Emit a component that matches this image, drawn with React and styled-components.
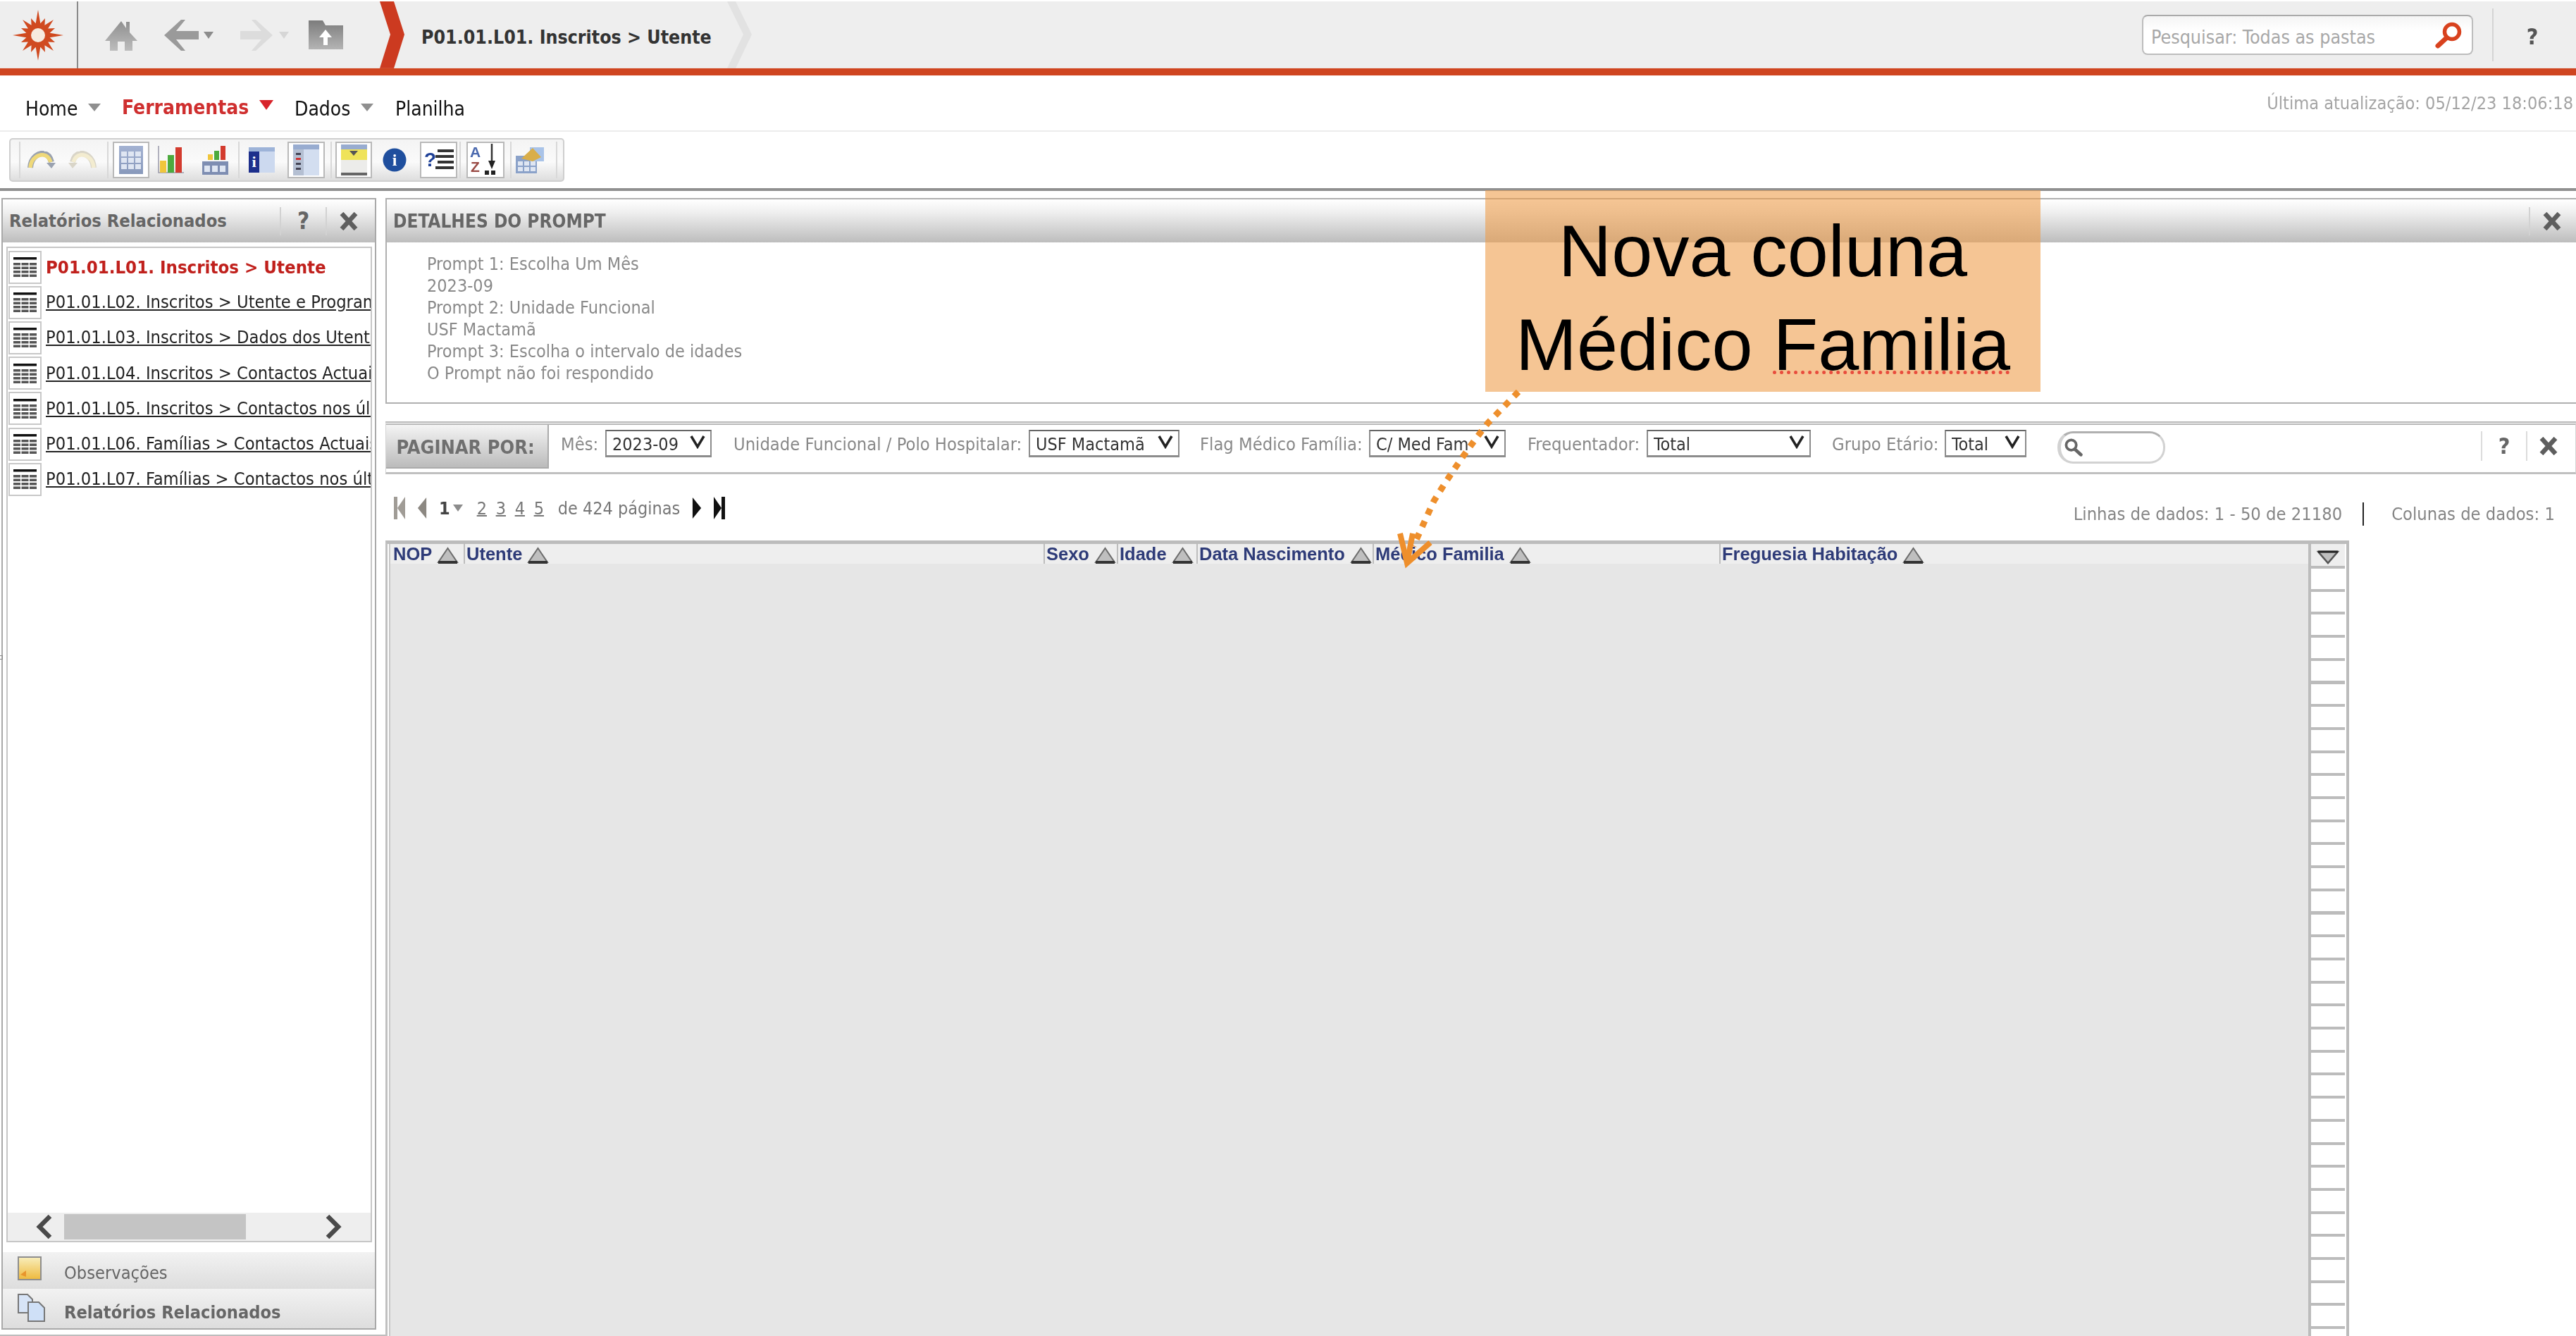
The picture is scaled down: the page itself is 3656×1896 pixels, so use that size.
import React from "react";
import styled, { createGlobalStyle } from "styled-components";

const SANS = `"DejaVu Sans", "Liberation Sans", sans-serif`;

const Global = createGlobalStyle`
  html, body { margin: 0; padding: 0; background: #fff; }
  body { width: 3656px; height: 1896px; overflow: hidden; font-family: ${SANS}; font-stretch: condensed; }
  * { box-sizing: border-box; }
`;

const Page = styled.div`position: relative; width: 3656px; height: 1896px; overflow: hidden; background: #fff;`;
const Shell = styled.div`display: flex; flex-direction: column; width: 3656px; height: 1896px; padding-top: 2px; filter: blur(0.55px);`;

const TopBar = styled.header`display: flex; align-items: center; height: 95px; background: #eeeeee; flex: none;`;
const LogoCell = styled.div`width: 111px; height: 100%; flex: none; display: flex; align-items: center; padding-left: 18px; border-right: 2px solid #8a8a8a;`;
const Slot = styled.span`display: flex; flex: none; margin-left: ${p => p.$ml || 0}px;`;
const Crumb = styled.div`margin-left: 23px; width: 412px; flex: none; padding-top: 6px; font-size: 26.5px; font-weight: 700; color: #333; white-space: nowrap;`;
const SearchBox = styled.div`
  margin-left: auto; width: 470px; height: 57px; flex: none; display: flex; align-items: center; justify-content: space-between;
  padding: 6px 14px 0 11px; border: 2px solid #bdbdbd; border-top-color: #aaa; border-radius: 8px; background: linear-gradient(#f5f5f5, #ffffff 40%);
  color: #a8a8a8; font-size: 26.6px; white-space: nowrap;
`;
const SearchGlass = styled.span`display: flex; margin-top: -6px;`;
const TopSep = styled.div`margin-left: 27px; width: 2px; height: 75px; background: #d4d4d4; flex: none;`;
const TopHelp = styled.div`width: 117px; padding-right: 7px; padding-top: 4px; text-align: center; font-size: 32px; font-weight: 700; color: #555; flex: none;`;
const Stripe = styled.div`height: 10px; background: #cf4520; flex: none; box-shadow: 0 0 1px #e9a58c;`;

const MenuRow = styled.nav`display: flex; align-items: center; height: 80px; flex: none; padding: 0 4px 0 36px; border-bottom: 2px solid #ececec;`;
const MenuItem = styled.span`
  flex: none; width: ${p => p.$w}px; margin-left: ${p => p.$ml || 0}px; font-size: 28px; white-space: nowrap;
  color: ${p => (p.$active ? "#cf2f2f" : "#111")}; font-weight: ${p => (p.$active ? 700 : 400)};
  position: relative; top: ${p => (p.$active ? 6 : 8)}px;
`;
const Caret = styled.span`
  flex: none; margin-left: ${p => p.$ml}px; width: 0; height: 0; position: relative; top: ${p => (p.$active ? 3 : 6)}px;
  border-left: ${p => (p.$active ? 10 : 9)}px solid transparent; border-right: ${p => (p.$active ? 10 : 9)}px solid transparent;
  border-top: ${p => (p.$active ? 14 : 11)}px solid ${p => (p.$active ? "#d8232a" : "#8f8f8f")};
`;
const UpdatedAt = styled.span`margin-left: auto; position: relative; top: 0; font-size: 25.1px; color: #a4a4a4; white-space: nowrap;`;

const ToolRow = styled.div`height: 84px; flex: none; padding: 9px 0 0 13px; border-bottom: 4px solid #909090;`;
const Toolbar = styled.div`
  display: flex; align-items: center; width: 788px; height: 62px; padding-left: 12px; border: 2px solid #cfcfcf; border-radius: 5px;
  background: linear-gradient(#f4f4f4, #fafafa 55%, #dedede);
`;
const ToolDivider = styled.span`flex: none; width: 2px; height: 52px; background: #d8d8d8; margin-left: ${p => p.$ml}px;`;
const ToolSlot = styled.span`
  flex: none; display: flex; align-items: center; justify-content: center; width: ${p => p.$w}px; height: 52px; margin-left: ${p => p.$ml}px;
  ${p => (p.$boxed ? "background:#fff;border:2px solid #b9b9b9;" : "")}
`;

const Body = styled.div`display: flex; flex: 1; min-height: 0; padding: 10px 0 0 2px; gap: 13px;`;

const SidePanel = styled.aside`width: 532px; height: 1606px; flex: none; display: flex; flex-direction: column; border: 2px solid #a9a9a9;`;
const HeadBar = styled.div`
  display: flex; align-items: center; height: 61px; flex: none; padding-left: ${p => p.$pl}px;
  background: linear-gradient(#ffffff, #efefef 30%, #bdbdbd); color: #666; font-size: ${p => p.$fs}px; font-weight: 700; white-space: nowrap;
`;
const HeadTitle = styled.span`flex: none; width: 384px;`;
const HeadSep = styled.span`flex: none; width: 2px; height: 40px; background: #d2d2d2; margin-left: ${p => p.$ml || 0}px;`;
const HeadHelp = styled.span`flex: none; width: ${p => p.$w}px; text-align: center; font-size: 33px; font-weight: 700; color: #666;`;
const ListFrame = styled.div`flex: 1; min-height: 0; margin: 6px 4px 14px 5px; display: flex; flex-direction: column; border: 2px solid #c6c6c6;`;
const ListBody = styled.div`flex: 1; padding: 2px 0 0 1px; display: flex; flex-direction: column; overflow: hidden;`;
const ReportRow = styled.div`display: flex; align-items: center; height: 50.2px; flex: none; gap: 6px;`;
const ReportIcon = styled.span`flex: none; width: 47px; height: 47px; display: flex; align-items: center; justify-content: center; border: 2px solid #c8c8c8; background: #fff;`;
const ReportLink = styled.a`
  flex: 1; min-width: 0; overflow: hidden; white-space: nowrap; font-size: ${p => (p.$active ? 25.6 : 25.25)}px; line-height: 36px;
  color: ${p => (p.$active ? "#c0201c" : "#222")}; font-weight: ${p => (p.$active ? 700 : 400)};
  text-decoration: ${p => (p.$active ? "none" : "underline")};
`;
const HScroll = styled.div`display: flex; align-items: center; height: 40px; flex: none; background: #eeeeee; position: relative;`;
const Thumb = styled.span`flex: none; width: 258px; height: 36px; margin-left: 16px; background: #c4c4c4;`;
const SideTab = styled.div`
  display: flex; align-items: flex-end; height: ${p => p.$h}px; flex: none; padding: 0 0 8px 21px;
  background: linear-gradient(#f2f2f2, #dddddd); color: #666; font-size: 25.2px; font-weight: ${p => (p.$strong ? 700 : 400)}; white-space: nowrap;
`;
const TabIcon = styled.span`flex: none; width: 66px; align-self: flex-start; margin-top: 6px;`;

const Main = styled.main`flex: 1; min-width: 0; display: flex; flex-direction: column;`;
const PromptPanel = styled.section`height: 292px; flex: none; border: 2px solid #b0b0b0; border-right: none;`;
const PromptTitle = styled.span`flex: none; width: 3031px;`;
const PromptBody = styled.div`padding: 15px 0 0 57px; font-size: 25px; line-height: 31px; color: #8a8a8a;`;

const PagingBar = styled.section`
  display: flex; align-items: flex-start; height: 75px; margin-top: 25px; flex: none; border: 1px solid #d4d4d4; border-top: 5px double #b8b8b8; border-bottom: 3px solid #c0c0c0;
`;
const PagingButton = styled.div`
  flex: none; width: 231px; height: 62px; margin-right: 17px; display: flex; align-items: center; justify-content: center; padding: 2px 4px 0 0;
  background: linear-gradient(#f4f4f4, #bbbbbb); border-right: 2px solid #aaa; border-bottom: 2px solid #aaa; color: #6f6f6f; font-size: 27px; font-weight: 700; white-space: nowrap;
`;
const FilterLabel = styled.span`flex: none; width: ${p => p.$w}px; margin-top: 13px; font-size: 25.3px; color: #888; white-space: nowrap;`;
const SelectBox = styled.div`
  flex: none; display: flex; align-items: center; justify-content: space-between; width: ${p => p.$w}px; height: 39px; margin: 7px ${p => p.$mr || 0}px 0 9px; padding: 2px 7px 0 8px;
  background: #fff; border: 2px solid #8c8c8c; border-top-color: #666; border-bottom-width: 3px; color: #333; font-size: 25px; overflow: hidden; white-space: nowrap;
`;
const SelectText = styled.span`flex: 1; min-width: 0; overflow: hidden;`;
const SearchPill = styled.div`
  flex: none; display: flex; align-items: center; width: 153px; height: 46px; margin: 9px 0 0 44px; padding-left: 5px;
  background: #fff; border: 3px solid #d2d2d2; border-left-width: 5px; border-top-color: #b0b0b0; border-radius: 22px;
`;
const PillGlass = styled.span`display: flex; transform: scaleX(-1);`;
const BarTools = styled.div`margin-left: auto; display: flex; align-items: center; height: 52px; margin-top: 4px; padding-right: 25px;`;
const BarSep = styled.span`flex: none; width: 2px; height: 42px; background: #dcdcdc;`;
const BarHelp = styled.span`flex: none; width: ${p => p.$w}px; text-align: center; font-size: 32px; font-weight: 700; color: #666;`;

const PagerRow = styled.div`display: flex; align-items: center; height: 94px; flex: none; padding-left: 12px; color: #777; font-size: 25px;`;
const PagerSlot = styled.span`flex: none; display: flex; margin-left: ${p => p.$ml || 0}px; position: relative; top: 1px;`;
const PageCurrent = styled.span`flex: none; margin-left: 16px; position: relative; top: 1px; font-weight: 700; color: #444;`;
const PageGap = styled.span`flex: none; width: 20px;`;
const PageLink = styled.a`flex: none; width: 27px; position: relative; top: 1px; color: #777; text-decoration: underline; text-decoration-thickness: 2px;`;
const PagerText = styled.span`flex: none; width: 172px; margin-left: 7px; position: relative; top: 1px; white-space: nowrap;`;
const PagerSpacer = styled.span`flex: none; width: 1914px;`;
const DataStat = styled.span`flex: none; position: relative; top: 9px; white-space: nowrap; color: #858585; font-size: 25.3px;`;
const DataSep = styled.span`flex: none; width: 2px; height: 33px; margin: 18px 39px 0 29px; background: #222;`;

const TableFrame = styled.section`display: flex; flex: 1; min-height: 0; width: 2787px; border-top: 5px solid #bcbcbc; border-left: 3px solid #c0c0c0; border-right: 4px solid #bcbcbc;`;
const TableMain = styled.div`flex: 1; min-width: 0; display: flex; flex-direction: column; margin-left: 2px; border-left: 2px solid #c8c8c8; background: #e6e6e6;`;
const HeaderRow = styled.div`display: grid; grid-template-columns: 104px 823px 104px 113px 250px 492px 1fr; height: 28px; flex: none; background: #eeeeee;`;
const HeaderCell = styled.div`
  display: flex; align-items: center; gap: 7px; padding-left: 2px; white-space: nowrap; overflow: hidden;
  font-family: "Liberation Sans", sans-serif; font-stretch: normal; font-size: 25.5px; font-weight: 700; color: #2e3b78;
  border-left: 2px solid ${p => (p.$first ? "transparent" : "#bdbdbd")};
`;
const SortUpGlyph = styled.svg`flex: none; margin-top: 4px;`;
const TickColumn = styled.div`
  flex: none; width: 52px; display: flex; flex-direction: column; border-left: 4px solid #bcbcbc;
  background: repeating-linear-gradient(to bottom, #bcbcbc 0 4px, transparent 4px 32.7px); background-position: 0 31px; background-repeat: no-repeat;
  margin-right: 2px;
`;
const TickHead = styled.div`height: 31px; flex: none; background: #eeeeee; display: flex; justify-content: center; padding-top: 9px;`;

const SideNotch = styled.span`position: absolute; left: 0; top: 930px; width: 4px; height: 6px; border: 1px solid #888; border-left: none;`;
const BottomRule = styled.span`position: absolute; left: 0; bottom: 0; width: 547px; height: 2px; background: #bdbdbd;`;

const Callout = styled.aside`
  position: absolute; left: 2108px; top: 270px; width: 788px; height: 286px; padding-top: 19px; background: rgba(238,155,70,.58);
  color: #000; text-align: center; font-family: "Liberation Sans", sans-serif; font-stretch: normal; font-size: 104.4px; line-height: 133px; white-space: nowrap;
`;
const Squiggle = styled.span`text-decoration: underline dotted #e84c3d 5px; text-decoration-skip-ink: none; text-underline-offset: 1px;`;
const ArrowLayer = styled.svg`position: absolute; left: 0; top: 0; pointer-events: none;`;

/* ---- drawings ---- */
const Logo = () => {
  const pts = [];
  const n = 16;
  for (let i = 0; i < n * 2; i++) {
    const a = (Math.PI * i) / n - Math.PI / 2;
    const major = i % 8 === 0;
    const r = i % 2 ? 17 : major ? 36 : i % 4 === 0 ? 31 : 26;
    pts.push(`${36 + r * Math.cos(a)},${36 + r * Math.sin(a)}`);
  }
  return (
    <svg width="72" height="72" viewBox="0 0 72 72">
      <polygon points={pts.join(" ")} fill="#d04a20" />
      <circle cx="36" cy="36" r="10" fill="#f7ebdf" />
    </svg>
  );
};
const Grad = ({ id, a, b }) => (
  <linearGradient id={id} x1="0" y1="0" x2="0" y2="1">
    <stop offset="0" stopColor={a} />
    <stop offset="1" stopColor={b} />
  </linearGradient>
);
const HomeIcon = () => (
  <svg width="46" height="44" viewBox="0 0 46 44">
    <defs><Grad id="gh" a="#8f8f8f" b="#bdbdbd" /></defs>
    <path d="M23 2 L30 12 V3 H35 V18 L46 30 H39 V44 H28 V31 H18 V44 H7 V30 H0 Z" fill="url(#gh)" />
  </svg>
);
const BackIcon = () => (
  <svg width="49" height="44" viewBox="0 0 49 44">
    <path d="M24 0 H30 L17 16 H49 V28 H17 L30 44 H24 L0 22 Z" fill="#9a9a9a" />
  </svg>
);
const ForwardIcon = () => (
  <svg width="46" height="44" viewBox="0 0 46 44">
    <path d="M22 0 H16 L30 16 H0 V28 H30 L16 44 H22 L46 22 Z" fill="#dcdcdc" />
  </svg>
);
const MiniCaret = ({ light }) => (
  <svg width="14" height="10" viewBox="0 0 14 10"><path d="M0 0H14L7 10Z" fill={light ? "#d6d6d6" : "#8c8c8c"} /></svg>
);
const FolderUp = () => (
  <svg width="49" height="41" viewBox="0 0 49 41">
    <defs><Grad id="gf" a="#7c7c7c" b="#b4b4b4" /></defs>
    <path d="M0 0H20L24 7H49V41H0Z" fill="url(#gf)" />
    <path d="M24 13L33 24H27V35H21V24H15Z" fill="#fff" />
  </svg>
);
const Chevron = ({ color, w }) => (
  <svg width="38" height="95" viewBox="0 0 38 95">
    <path d={`M2 0 H${w} L37 47 L${w} 95 H2 L${39 - w} 47 Z`} fill={color} />
  </svg>
);
const Magnifier = ({ c = "#d8421e", s = 38 }) => (
  <svg width={s} height={s} viewBox="0 0 38 38">
    <circle cx="24" cy="14" r="10.5" fill="none" stroke={c} strokeWidth="5.5" />
    <path d="M16 23L4 34" stroke={c} strokeWidth="7" strokeLinecap="round" />
  </svg>
);
const CloseX = ({ s = 26, c = "#5e5e5e" }) => (
  <svg width={s} height={s} viewBox="0 0 26 26"><path d="M3 2L23 24M23 2L3 24" stroke={c} strokeWidth="6.5" /></svg>
);
const UndoIcon = ({ flip, light }) => (
  <svg width="41" height="26" viewBox="0 0 41 26" style={flip ? { transform: "scaleX(-1)" } : undefined}>
    <path d="M5 24 C6 8 18 3 24 4 C31 5 34 12 35 16" fill="none" stroke={light ? "#d9d5c8" : "#9aa2b0"} strokeWidth="8" />
    <path d="M5 24 C6 9 18 5 24 6 C30 7 33 13 34 16" fill="none" stroke={light ? "#f3ecd0" : "#efd97a"} strokeWidth="5.5" />
    <path d="M28 17 H41 L35 25Z" fill={light ? "#d9d5c8" : "#9aa2b0"} />
  </svg>
);
const GridIcon = () => (
  <svg width="34" height="40" viewBox="0 0 34 40">
    <defs><Grad id="gt" a="#a3b2d2" b="#8899bb" /></defs>
    <rect width="34" height="40" fill="url(#gt)" />
    {[0, 1, 2].map(c =>
      [8, 17, 26].map(y => <rect key={`${c}-${y}`} x={3 + c * 10} y={y} width="8" height="7" fill="#dfe6f2" />)
    )}
  </svg>
);
const BarsIcon = () => (
  <svg width="37" height="40" viewBox="0 0 37 40">
    <path d="M1 0V38H37" fill="none" stroke="#99a" strokeWidth="1.5" />
    <rect x="3" y="21" width="9" height="17" fill="#f0c63c" />
    <rect x="14" y="13" width="9" height="25" fill="#4caa3e" />
    <rect x="25" y="2" width="9" height="36" fill="#d33b2e" />
  </svg>
);
const PivotIcon = () => (
  <svg width="37" height="41" viewBox="0 0 37 41">
    <rect x="8" y="12" width="7" height="8" fill="#f0c63c" />
    <rect x="17" y="7" width="7" height="13" fill="#4caa3e" />
    <rect x="26" y="0" width="7" height="20" fill="#d33b2e" />
    <rect y="22" width="37" height="19" fill="#7e8eb2" />
    {[3, 14, 25].map(x => <rect key={x} x={x} y="28" width="8" height="9" fill="#dfe6f2" />)}
  </svg>
);
const InfoPane = () => (
  <svg width="37" height="36" viewBox="0 0 37 36">
    <rect width="37" height="36" fill="#ccd9ef" />
    <rect width="37" height="6" fill="#9db3d8" />
    <rect x="0" y="6" width="15" height="30" fill="#1d2f8c" />
    <text x="7.5" y="28" textAnchor="middle" fontFamily="Liberation Serif, serif" fontWeight="700" fontSize="22" fill="#fff">i</text>
  </svg>
);
const ListPane = () => (
  <svg width="37" height="44" viewBox="0 0 37 44">
    <rect width="37" height="44" fill="#d3def0" />
    <rect width="37" height="7" fill="#98acd0" />
    <rect y="7" width="15" height="37" fill="#b4bfd2" />
    {[12, 19, 26, 33].map((y, i) => <rect key={y} x="4" y={y} width="7" height="3" fill={i === 1 ? "#c33" : "#445"} />)}
  </svg>
);
const FilterPane = () => (
  <svg width="37" height="44" viewBox="0 0 37 44">
    <rect width="37" height="44" fill="#ececea" />
    <rect width="37" height="7" fill="#98acd0" />
    <rect y="7" width="37" height="15" fill="#efe35a" />
    <path d="M12 9H24L18 16Z" fill="#555" />
    <rect y="40" width="37" height="4" fill="#666" />
  </svg>
);
const InfoDot = () => (
  <svg width="34" height="34" viewBox="0 0 34 34">
    <circle cx="17" cy="17" r="16.5" fill="#1f4f9e" />
    <text x="17" y="25" textAnchor="middle" fontFamily="Liberation Serif, serif" fontWeight="700" fontSize="24" fill="#fff">i</text>
  </svg>
);
const QuestionList = () => (
  <svg width="42" height="32" viewBox="0 0 42 32">
    <text x="0" y="25" fontFamily="Liberation Sans, sans-serif" fontWeight="700" fontSize="28" fill="#1d3f96">?</text>
    {[3, 11, 19, 27].map((y, i) => <rect key={y} x={i % 2 ? 16 : 19} y={y - 2} width={i % 2 ? 26 : 23} height="4" fill="#333" />)}
  </svg>
);
const SortIcon = () => (
  <svg width="44" height="46" viewBox="0 0 44 46">
    <text x="0" y="19" fontFamily="Liberation Sans, sans-serif" fontWeight="700" fontSize="21" fill="#4a68ae">A</text>
    <text x="1" y="40" fontFamily="Liberation Sans, sans-serif" fontWeight="700" fontSize="21" fill="#9a4a44">Z</text>
    <path d="M31 0V32" stroke="#333" strokeWidth="2.5" />
    <path d="M26 24H36L31 36Z" fill="#222" />
    <rect x="21" y="38" width="6" height="6" fill="#222" />
    <rect x="30" y="38" width="6" height="6" fill="#222" />
  </svg>
);
const ExportIcon = () => (
  <svg width="40" height="37" viewBox="0 0 40 37">
    <rect x="0" y="12" width="30" height="25" fill="#8ba2c9" />
    {[3, 12, 21].map(x => [20, 28].map(y => <rect key={x + "-" + y} x={x} y={y} width="7" height="6" fill="#dfe6f2" />))}
    <rect x="20" y="0" width="20" height="20" fill="#a9c3e8" />
    <path d="M8 16 L24 1 L36 14 L24 20Z" fill="#d9ae4a" />
  </svg>
);
const TableGlyph = () => (
  <svg width="33" height="28" viewBox="0 0 33 28">
    <rect width="33" height="3.5" fill="#111" />
    {[8, 13.5, 19, 24.5].map(y => [0, 11.5, 23].map(x => <rect key={x + "-" + y} x={x} y={y} width="10" height="3.5" fill="#555" />))}
  </svg>
);
const ChevronLeft = ({ right }) => (
  <svg width="24" height="36" viewBox="0 0 24 36" style={right ? { transform: "scaleX(-1)" } : undefined}>
    <path d="M20 3L5 18L20 33" fill="none" stroke="#4a4a4a" strokeWidth="6.5" />
  </svg>
);
const NoteIcon = () => (
  <svg width="34" height="34" viewBox="0 0 34 34">
    <defs><Grad id="gn" a="#f8eebc" b="#eeb93c" /></defs>
    <rect x="1" y="1" width="32" height="32" fill="url(#gn)" stroke="#8e8e8e" strokeWidth="2" />
    <path d="M4 26L12 29V20Z" fill="#e8952c" />
  </svg>
);
const DocsIcon = () => (
  <svg width="40" height="42" viewBox="0 0 40 42">
    <path d="M1 2H14L21 9V28H1Z" fill="#d7e4f7" stroke="#777" strokeWidth="2" />
    <path d="M15 13H30L38 21V40H15Z" fill="#cfe0f7" stroke="#777" strokeWidth="2" />
  </svg>
);
const SortUp = () => (
  <SortUpGlyph width="31" height="24" viewBox="0 0 31 24">
    <path d="M15.5 2L29 22H2Z" fill="#bfbfbf" stroke="#6c6c6c" strokeWidth="2" />
    <path d="M2 22H29" stroke="#333" strokeWidth="4" />
  </SortUpGlyph>
);
const SortDown = () => (
  <svg width="32" height="20" viewBox="0 0 32 20">
    <path d="M2 2H30L16 18Z" fill="#bfbfbf" stroke="#555" strokeWidth="2.5" />
    <path d="M2 2H30" stroke="#222" strokeWidth="3" />
  </svg>
);
const SelectChevron = () => (
  <svg width="22" height="20" viewBox="0 0 22 20" style={{ flex: "none", marginTop: -6 }}>
    <path d="M2 2L11 17L20 2" fill="none" stroke="#222" strokeWidth="3.5" />
  </svg>
);
const PagerTri = ({ dir, bar, c }) => (
  <svg width={bar ? 16 : 15} height="36" viewBox="0 0 16 36">
    {dir === "left"
      ? <path d={bar ? "M16 2V34L5 18Z" : "M14 2V34L1 18Z"} fill={c} />
      : <path d={bar ? "M0 2V34L11 18Z" : "M1 2V34L14 18Z"} fill={c} />}
    {bar && <rect x={dir === "left" ? 0 : 11} y="2" width="5" height="32" fill={c} />}
  </svg>
);

const ARROW_DOTS = "M2155 556 L2112 600 C2088 630 2060 670 2035 711 L2006 775";

const reports = [
  ["P01.01.L01. Inscritos > Utente", true],
  ["P01.01.L02. Inscritos > Utente e Programa"],
  ["P01.01.L03. Inscritos > Dados dos Utentes"],
  ["P01.01.L04. Inscritos > Contactos Actuais"],
  ["P01.01.L05. Inscritos > Contactos nos últimos"],
  ["P01.01.L06. Famílias > Contactos Actuais"],
  ["P01.01.L07. Famílias > Contactos nos últimos"],
];

const tools = [
  { w: 41, ml: 9, i: <UndoIcon /> },
  { w: 41, ml: 18, i: <UndoIcon flip light /> },
  { d: 14 },
  { w: 52, ml: 6, b: 1, i: <GridIcon /> },
  { w: 37, ml: 12, i: <BarsIcon /> },
  { w: 37, ml: 26, i: <PivotIcon /> },
  { d: 14 },
  { w: 37, ml: 13, i: <InfoPane /> },
  { w: 53, ml: 18, b: 1, i: <ListPane /> },
  { d: 8 },
  { w: 52, ml: 5, b: 1, i: <FilterPane /> },
  { w: 34, ml: 15, i: <InfoDot /> },
  { w: 53, ml: 19, b: 1, i: <QuestionList /> },
  { d: 3 },
  { w: 54, ml: 8, b: 1, i: <SortIcon /> },
  { d: 8 },
  { w: 40, ml: 6, i: <ExportIcon /> },
  { d: 17 },
];

const columns = ["NOP", "Utente", "Sexo", "Idade", "Data Nascimento", "Médico Familia", "Freguesia Habitação"];

export default function App() {
  return (
    <Page>
      <Global />
      <Shell>
        <TopBar>
          <LogoCell><Logo /></LogoCell>
          <Slot $ml={38}><HomeIcon /></Slot>
          <Slot $ml={38}><BackIcon /></Slot>
          <Slot $ml={7}><MiniCaret /></Slot>
          <Slot $ml={38}><ForwardIcon /></Slot>
          <Slot $ml={9}><MiniCaret light /></Slot>
          <Slot $ml={28}><FolderUp /></Slot>
          <Slot $ml={50}><Chevron color="#cc3a20" w={22} /></Slot>
          <Crumb>P01.01.L01. Inscritos &gt; Utente</Crumb>
          <Slot $ml={20}><Chevron color="#e2e2e2" w={14} /></Slot>
          <SearchBox>Pesquisar: Todas as pastas<SearchGlass><Magnifier /></SearchGlass></SearchBox>
          <TopSep />
          <TopHelp>?</TopHelp>
        </TopBar>
        <Stripe />
        <MenuRow>
          <MenuItem $w={72}>Home</MenuItem>
          <Caret $ml={17} />
          <MenuItem $w={179} $ml={30} $active>Ferramentas</MenuItem>
          <Caret $ml={16} $active />
          <MenuItem $w={78} $ml={30}>Dados</MenuItem>
          <Caret $ml={16} />
          <MenuItem $w={95} $ml={31}>Planilha</MenuItem>
          <UpdatedAt>Última atualização: 05/12/23 18:06:18</UpdatedAt>
        </MenuRow>
        <ToolRow>
          <Toolbar>
            <ToolDivider $ml={0} />
            {tools.map((t, n) =>
              t.d ? <ToolDivider key={n} $ml={t.d} /> : <ToolSlot key={n} $w={t.w} $ml={t.ml} $boxed={t.b}>{t.i}</ToolSlot>
            )}
          </Toolbar>
        </ToolRow>
        <Body>
          <SidePanel>
            <HeadBar $pl={9} $fs={25.3}>
              <HeadTitle>Relatórios Relacionados</HeadTitle>
              <HeadSep />
              <HeadHelp $w={63}>?</HeadHelp>
              <HeadSep />
              <Slot $ml={18}><CloseX /></Slot>
            </HeadBar>
            <ListFrame>
              <ListBody>
                {reports.map(([label, active]) => (
                  <ReportRow key={label}>
                    <ReportIcon><TableGlyph /></ReportIcon>
                    <ReportLink $active={active}>{label}</ReportLink>
                  </ReportRow>
                ))}
              </ListBody>
              <HScroll>
                <Slot $ml={40}><ChevronLeft /></Slot>
                <Thumb />
                <Slot $ml={112}><ChevronLeft right /></Slot>
              </HScroll>
            </ListFrame>
            <SideTab $h={52}><TabIcon><NoteIcon /></TabIcon>Observações</SideTab>
            <SideTab $h={56} $strong><TabIcon><DocsIcon /></TabIcon>Relatórios Relacionados</SideTab>
          </SidePanel>
          <Main>
            <PromptPanel>
              <HeadBar $pl={9} $fs={26}>
                <PromptTitle>DETALHES DO PROMPT</PromptTitle>
                <HeadSep />
                <Slot $ml={18}><CloseX /></Slot>
              </HeadBar>
              <PromptBody>
                Prompt 1: Escolha Um Mês<br />2023-09<br />Prompt 2: Unidade Funcional<br />USF Mactamã<br />Prompt 3: Escolha o intervalo de idades<br />O Prompt não foi respondido
              </PromptBody>
            </PromptPanel>
            <PagingBar>
              <PagingButton>PAGINAR POR:</PagingButton>
              <FilterLabel $w={54}>Mês:</FilterLabel>
              <SelectBox $w={151} $mr={31}><SelectText>2023-09</SelectText><SelectChevron /></SelectBox>
              <FilterLabel $w={410}>Unidade Funcional / Polo Hospitalar:</FilterLabel>
              <SelectBox $w={214} $mr={29}><SelectText>USF Mactamã</SelectText><SelectChevron /></SelectBox>
              <FilterLabel $w={231}>Flag Médico Família:</FilterLabel>
              <SelectBox $w={194} $mr={31}><SelectText>C/ Med Fam</SelectText><SelectChevron /></SelectBox>
              <FilterLabel $w={160}>Frequentador:</FilterLabel>
              <SelectBox $w={233} $mr={30}><SelectText>Total</SelectText><SelectChevron /></SelectBox>
              <FilterLabel $w={151}>Grupo Etário:</FilterLabel>
              <SelectBox $w={116}><SelectText>Total</SelectText><SelectChevron /></SelectBox>
              <SearchPill><PillGlass><Magnifier c="#666" s={26} /></PillGlass></SearchPill>
              <BarTools>
                <BarSep />
                <BarHelp $w={62}>?</BarHelp>
                <BarSep />
                <Slot $ml={17}><CloseX /></Slot>
              </BarTools>
            </PagingBar>
            <PagerRow>
              <PagerSlot><PagerTri dir="left" bar c="#a09c96" /></PagerSlot>
              <PagerSlot $ml={17}><PagerTri dir="left" c="#8c8882" /></PagerSlot>
              <PageCurrent>1</PageCurrent>
              <PagerSlot $ml={4}><MiniCaret /></PagerSlot>
              <PageGap />
              <PageLink>2</PageLink><PageLink>3</PageLink><PageLink>4</PageLink><PageLink>5</PageLink>
              <PagerText>de 424 páginas</PagerText>
              <PagerSlot $ml={18}><PagerTri dir="right" c="#111" /></PagerSlot>
              <PagerSlot $ml={16}><PagerTri dir="right" bar c="#111" /></PagerSlot>
              <PagerSpacer />
              <DataStat>Linhas de dados: 1 - 50 de 21180</DataStat>
              <DataSep />
              <DataStat>Colunas de dados: 1</DataStat>
            </PagerRow>
            <TableFrame>
              <TableMain>
                <HeaderRow>
                  {columns.map((c, n) => <HeaderCell key={c} $first={n === 0}>{c}<SortUp /></HeaderCell>)}
                </HeaderRow>
              </TableMain>
              <TickColumn><TickHead><SortDown /></TickHead></TickColumn>
            </TableFrame>
          </Main>
        </Body>
      </Shell>
      <SideNotch />
      <BottomRule />
      <Callout>Nova coluna<br />Médico <Squiggle>Familia</Squiggle></Callout>
      <ArrowLayer width="3656" height="1896" viewBox="0 0 3656 1896">
        <path d={ARROW_DOTS} fill="none" stroke="#ee8f2c" strokeWidth="9" strokeDasharray="9 10" />
        <path d="M1987 757L1997 799L2030 770" fill="none" stroke="#ee8f2c" strokeWidth="8" />
        <path d="M2005 757L1997 799" fill="none" stroke="#ee8f2c" strokeWidth="8" />
      </ArrowLayer>
    </Page>
  );
}
